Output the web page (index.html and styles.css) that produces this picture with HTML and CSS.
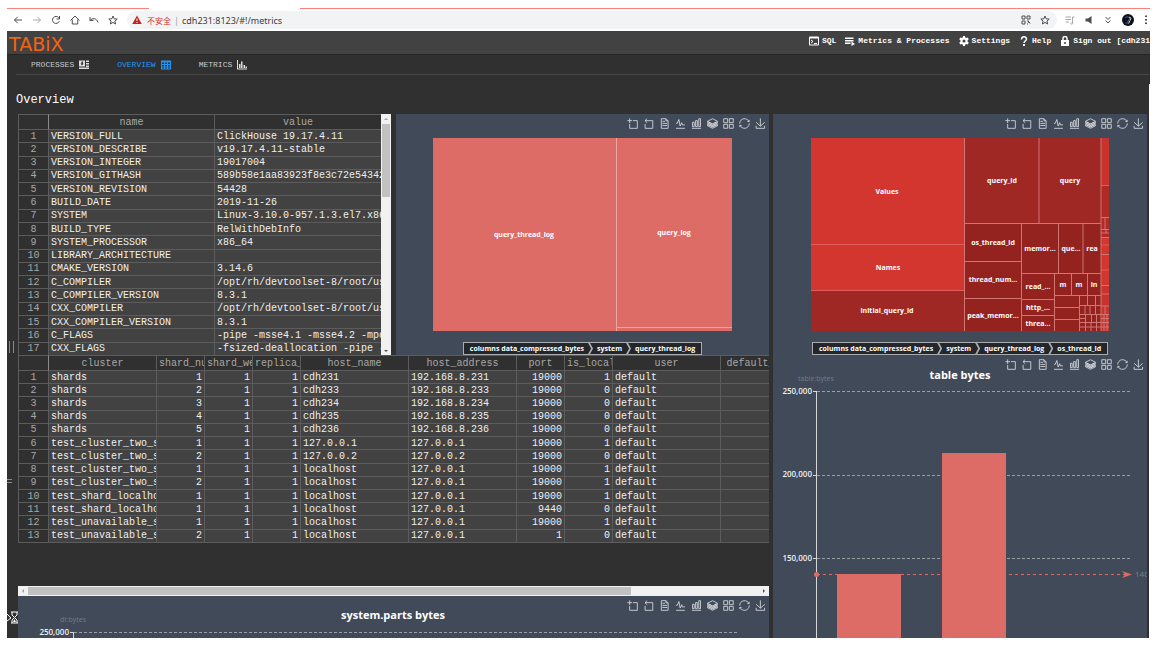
FILE: index.html
```html
<!DOCTYPE html>
<html lang="en">
<head>
<meta charset="utf-8">
<title>TABiX - Metrics</title>
<link rel="stylesheet" href="styles.css">
</head>
<body>
<svg class="defs" aria-hidden="true">
  <symbol id="i-zoom" viewBox="-2 -2 64 64"><path d="M0,13.5h26.9 M13.5,26.9V0 M32.1,13.5H58V58H13.5 V32.1"/></symbol>
  <symbol id="i-back" viewBox="-2 -2 64 64"><path d="M22,1.4L9.9,13.5l12.3,12.3 M10.3,13.5H54.9v44.6 H10.3v-26"/></symbol>
  <symbol id="i-data" viewBox="-2 -2 64 64"><path d="M17.5,17.3H33 M45.4,29.5h-28 M11.5,2v56H51V14.8L38.4,2H11.5z M38.4,2.2v12.7H51 M45.4,41.7h-28"/></symbol>
  <symbol id="i-line" viewBox="-2 -2 64 64"><path d="M4.1,28.9h7.1l9.3-22l7.4,38l9.7-19.7l3,12.8h14.9M4.1,58h51.4"/></symbol>
  <symbol id="i-bar" viewBox="-2 -2 64 64"><path d="M6.7,22.9h10V48h-10V22.9zM24.9,13h10v35h-10V13zM43.2,2h10v46h-10V2zM3.1,58h53.7"/></symbol>
  <symbol id="i-stack" viewBox="-2 -2 64 64"><path d="M8.2,38.4l-8.4,4.1l30.6,15.3L60,42.5l-8.1-4.1l-21.5,11L8.2,38.4z M51.9,30l-8.1,4.2l-13.4,6.9l-13.9-6.9L8.2,30l-8.4,4.2l8.4,4.2l22.2,11l21.5-11l8.1-4.2L51.9,30z M51.9,21.7l-8.1,4.2L35.7,30l-5.3,2.8L24.9,30l-8.4-4.1l-8.3-4.2l-8.4,4.2L8.2,30l8.3,4.2l13.9,6.9l13.4-6.9l8.1-4.2l8.1-4.1L51.9,21.7zM30.4,2.2L-0.2,17.5l8.4,4.1l8.3,4.2l8.4,4.2l5.5,2.7l5.3-2.7l8.1-4.2l8.1-4.2l8.1-4.1L30.4,2.2z"/></symbol>
  <symbol id="i-tiled" viewBox="-2 -2 64 64"><path d="M2.3,2.2h22.8V25H2.3V2.2z M35,2.2h22.8V25H35V2.2zM2.3,35h22.8v22.8H2.3V35z M35,35h22.8v22.8H35V35z"/></symbol>
  <symbol id="i-restore" viewBox="-2 -2 64 64"><path d="M47,18.9h9.8V8.7 M56.3,20.1 C52.1,9,40.5,0.6,26.8,2.1C12.6,3.7,1.6,16.2,2.1,30.6 M13,41.1H3.1v10.2 M3.7,39.9c4.2,11.1,15.8,19.5,29.5,18 c14.2-1.6,25.2-14.1,24.7-28.5"/></symbol>
  <symbol id="i-save" viewBox="-2 -2 64 64"><path d="M4.7,22.9L29.3,45.5L54.7,23.4M4.6,43.6L4.6,58L53.8,58L53.8,43.6M29.2,45.1L29.2,0"/></symbol>
  <symbol id="i-star" viewBox="0 0 20 20"><path d="M10 2l2.400 5.600 6 .5-4.600 4 1.400 5.900L10 14.800 4.800 18l1.400-5.900-4.600-4 6-.5z"/></symbol>
</svg>

<div class="window">
  <div class="strip"><span class="strip-a"></span><span class="strip-b"></span></div>

  <div class="browser">
    <div class="tools">
      <button type="button" aria-label="Back"><svg viewBox="0 0 20 20"><path d="M18 10H3M9.500 3.500L3 10l6.500 6.500"/></svg></button>
      <button type="button" class="dim" aria-label="Forward"><svg viewBox="0 0 20 20"><path d="M2 10h15M10.500 3.500L17 10l-6.500 6.500"/></svg></button>
      <button type="button" aria-label="Reload"><svg viewBox="0 0 20 20"><path d="M16.500 12.500A7 7 0 1 1 15.500 5.500M17 2v6h-6"/></svg></button>
      <button type="button" aria-label="Home"><svg viewBox="0 0 20 20"><path d="M1 11L10 2l9 9M4.500 9v9h11V9"/></svg></button>
      <button type="button" aria-label="Undo"><svg viewBox="0 0 20 20"><path d="M2 4v7h7M2 11C6 6 15 5 18 15"/></svg></button>
      <button type="button" aria-label="Favorites"><svg><use href="#i-star"/></svg></button>
    </div>
    <div class="address">
      <svg class="warn" viewBox="0 0 20 20"><path d="M10 1l9.500 17H.5z"/><path class="mark" d="M10 7v5M10 14v2"/></svg>
      <span class="unsafe">不安全</span>
      <span class="bar">|</span>
      <input type="text" aria-label="Address" value="cdh231:8123/#!/metrics">
      <button type="button" aria-label="QR code"><svg viewBox="0 0 20 20"><path d="M2 2h6v6H2zM12 2h6v6h-6zM2 12h6v6H2zM12 12h3v3h3M12 18h2M18 18v-1"/></svg></button>
      <button type="button" aria-label="Bookmark"><svg><use href="#i-star"/></svg></button>
    </div>
    <div class="tools tools-end">
      <button type="button" class="dim" aria-label="Playlist"><svg viewBox="0 0 20 20"><path d="M1 4h11M1 9h11M1 14h7M15 16V4h4M15 15a2 2 0 1 1-3 0"/></svg></button>
      <button type="button" aria-label="Mute"><svg viewBox="0 0 20 20"><path class="solid" d="M3 7h5l7-5v16l-7-5H3z"/></svg></button>
      <button type="button" aria-label="More extensions"><svg viewBox="0 0 20 20"><path d="M5 4l5 5 5-5M5 11l5 5 5-5"/></svg></button>
      <button type="button" class="avatar" aria-label="Profile"><svg viewBox="0 0 24 24"><circle cx="12" cy="12" r="12" fill="#0b1020" stroke="none"/><path d="M6 8c4-4 8-2 9 1s-4 3-3 6-3 4-5 3" fill="none" stroke="#4f6b9c" stroke-width="2"/><path d="M14 6l4 2-2 5-3 6" fill="none" stroke="#d0d09a" stroke-width="2"/></svg></button>
      <button type="button" class="dots" aria-label="Menu"><svg viewBox="0 0 6 20"><path class="solid" d="M1 1h4v3H1zM1 8h4v3H1zM1 15h4v3H1z"/></svg></button>
    </div>
  </div>

  <header class="header">
    <a class="logo" href="#">TABiX</a>
    <nav class="menu" aria-label="Main">
      <a href="#"><svg viewBox="0 0 20 20"><path fill="#fff" fill-rule="evenodd" d="M2 1h16a2 2 0 0 1 2 2v14a2 2 0 0 1-2 2H2a2 2 0 0 1-2-2V3a2 2 0 0 1 2-2zM2 5v12h16V5z"/><path d="M4 8l4 3-4 3M10 15h6" fill="none" stroke="#fff" stroke-width="2"/></svg>SQL</a>
      <a href="#"><svg viewBox="0 0 20 20"><path fill="#fff" d="M0 3h17v3H0zM0 8h17v3H0zM0 13h11v3H0zM13 11l7 5-7 4z"/></svg>Metrics &amp; Processes</a>
      <a href="#"><svg viewBox="0 0 20 20"><path fill="#fff" fill-rule="evenodd" d="M8 0h4l.5 3 2 1 3-1 2 3.500L17 9v2l2.500 2.500-2 3.500-3-1-2 1-.5 3H8l-.5-3-2-1-3 1-2-3.500L3 11V9L.5 6.500l2-3.500 3 1 2-1zM10 7a3 3 0 1 0 0 6 3 3 0 0 0 0-6z"/></svg>Settings</a>
      <a href="#"><svg viewBox="0 0 20 20"><path d="M5 7c0-7 10-7 10-1 0 4-5 4-5 8" fill="none" stroke="#fff" stroke-width="3"/><path fill="#fff" d="M8 16h4v4H8z"/></svg>Help</a>
      <a href="#"><svg viewBox="0 0 20 20"><path fill="#fff" fill-rule="evenodd" d="M2 8h16v12H2zM10 12a2 2 0 1 0 0 4 2 2 0 0 0 0-4z"/><path d="M6 9V5a4 4 0 0 1 8 0v4" fill="none" stroke="#fff" stroke-width="3"/></svg>Sign out [cdh231</a>
    </nav>
  </header>

  <nav class="tabs" aria-label="Sections">
    <a href="#">PROCESSES<svg viewBox="0 0 20 20"><path fill="#ddd" fill-rule="evenodd" d="M0 1h12v12H0zM5 3v4H3l3 4 3-4H8V3zM14 1h6v3h-6zM14 6h6v3h-6zM14 11h6v3h-6zM0 15h20v3H0z"/></svg></a>
    <a href="#" class="active" aria-current="page">OVERVIEW<svg viewBox="0 0 20 20"><path fill="#2196f3" fill-rule="evenodd" d="M0 1h20v18H0zM2 5v3h4V5zM8 5v3h4V5zM14 5v3h4V5zM2 10v3h4v-3zM8 10v3h4v-3zM14 10v3h4v-3zM2 15v2h4v-2zM8 15v2h4v-2zM14 15v2h4v-2z"/></svg></a>
    <a href="#">METRICS<svg viewBox="0 0 20 20"><path fill="#ddd" d="M0 0h2v17h18v2H0zM4 8h3v8H4zM8 3h3v13H8zM13 10h3v6h-3zM17 13h3v3h-3z"/></svg></a>
  </nav>

  <div class="page">
    <main class="content">
      <h1>Overview</h1>
      <div class="board">
        <div class="col">
          <div class="pair">
            <section class="sheet sheet-v">
              <div class="clip">
                <table class="info">
                  <colgroup><col class="w-num"><col class="w-name"><col></colgroup>
                  <thead><tr><th></th><th>name</th><th>value</th></tr></thead>
                  <tbody>
                    <tr><th>1</th><td>VERSION_FULL</td><td>ClickHouse 19.17.4.11</td></tr>
                    <tr><th>2</th><td>VERSION_DESCRIBE</td><td>v19.17.4.11-stable</td></tr>
                    <tr><th>3</th><td>VERSION_INTEGER</td><td>19017004</td></tr>
                    <tr><th>4</th><td>VERSION_GITHASH</td><td>589b58e1aa83923f8e3c72e543427</td></tr>
                    <tr><th>5</th><td>VERSION_REVISION</td><td>54428</td></tr>
                    <tr><th>6</th><td>BUILD_DATE</td><td>2019-11-26</td></tr>
                    <tr><th>7</th><td>SYSTEM</td><td>Linux-3.10.0-957.1.3.el7.x86_</td></tr>
                    <tr><th>8</th><td>BUILD_TYPE</td><td>RelWithDebInfo</td></tr>
                    <tr><th>9</th><td>SYSTEM_PROCESSOR</td><td>x86_64</td></tr>
                    <tr><th>10</th><td>LIBRARY_ARCHITECTURE</td><td></td></tr>
                    <tr><th>11</th><td>CMAKE_VERSION</td><td>3.14.6</td></tr>
                    <tr><th>12</th><td>C_COMPILER</td><td>/opt/rh/devtoolset-8/root/usr</td></tr>
                    <tr><th>13</th><td>C_COMPILER_VERSION</td><td>8.3.1</td></tr>
                    <tr><th>14</th><td>CXX_COMPILER</td><td>/opt/rh/devtoolset-8/root/usr</td></tr>
                    <tr><th>15</th><td>CXX_COMPILER_VERSION</td><td>8.3.1</td></tr>
                    <tr><th>16</th><td>C_FLAGS</td><td>-pipe -msse4.1 -msse4.2 -mpop</td></tr>
                    <tr><th>17</th><td>CXX_FLAGS</td><td>-fsized-deallocation -pipe -m</td></tr>
                  </tbody>
                </table>
              </div>
              <div class="scroll scroll-v"><svg viewBox="0 0 10 10"><path class="soft" d="M5 4l2 2H3z"/></svg><span class="thumb"></span><svg viewBox="0 0 10 10"><path d="M5 7l2-2H3z"/></svg></div>
            </section>

            <section class="chart">
              <svg class="plot" viewBox="0 0 373 241" role="img" aria-label="Compressed bytes by table">
                <rect class="salmon" x="37" y="24" width="299" height="193"/>
                <path class="cut light" d="M220.500 24v193M220 213.500h116"/>
                <g class="label"><text x="128" y="123">query_thread_log</text><text x="278" y="121">query_log</text></g>
              </svg>
              <div class="toolbox">
                <button type="button" aria-label="Zoom"><svg><use href="#i-zoom"/></svg></button><button type="button" aria-label="Zoom reset"><svg><use href="#i-back"/></svg></button><button type="button" aria-label="Data view"><svg><use href="#i-data"/></svg></button><button type="button" aria-label="Line"><svg><use href="#i-line"/></svg></button><button type="button" aria-label="Bar"><svg><use href="#i-bar"/></svg></button><button type="button" aria-label="Stack"><svg><use href="#i-stack"/></svg></button><button type="button" aria-label="Tiled"><svg><use href="#i-tiled"/></svg></button><button type="button" aria-label="Restore"><svg><use href="#i-restore"/></svg></button><button type="button" aria-label="Save"><svg><use href="#i-save"/></svg></button>
              </div>
              <ol class="crumbs"><li>columns data_compressed_bytes</li><li>system</li><li>query_thread_log</li></ol>
            </section>
          </div>

          <section class="sheet sheet-h">
            <div class="clip">
              <table class="hosts">
                <colgroup><col class="w-num"><col class="w-wide"><col class="w-slim"><col class="w-slim"><col class="w-slim"><col class="w-wide"><col class="w-wide"><col class="w-slim"><col class="w-slim"><col class="w-wide"><col class="w-wide"></colgroup>
                <thead><tr><th></th><th>cluster</th><th>shard_num</th><th>shard_weight</th><th>replica_num</th><th>host_name</th><th>host_address</th><th>port</th><th>is_local</th><th>user</th><th>default_database</th></tr></thead>
                <tbody>
                  <tr><th>1</th><td>shards</td><td class="n">1</td><td class="n">1</td><td class="n">1</td><td>cdh231</td><td>192.168.8.231</td><td class="n">19000</td><td class="n">1</td><td>default</td><td></td></tr>
                  <tr><th>2</th><td>shards</td><td class="n">2</td><td class="n">1</td><td class="n">1</td><td>cdh233</td><td>192.168.8.233</td><td class="n">19000</td><td class="n">0</td><td>default</td><td></td></tr>
                  <tr><th>3</th><td>shards</td><td class="n">3</td><td class="n">1</td><td class="n">1</td><td>cdh234</td><td>192.168.8.234</td><td class="n">19000</td><td class="n">0</td><td>default</td><td></td></tr>
                  <tr><th>4</th><td>shards</td><td class="n">4</td><td class="n">1</td><td class="n">1</td><td>cdh235</td><td>192.168.8.235</td><td class="n">19000</td><td class="n">0</td><td>default</td><td></td></tr>
                  <tr><th>5</th><td>shards</td><td class="n">5</td><td class="n">1</td><td class="n">1</td><td>cdh236</td><td>192.168.8.236</td><td class="n">19000</td><td class="n">0</td><td>default</td><td></td></tr>
                  <tr><th>6</th><td>test_cluster_two_shards</td><td class="n">1</td><td class="n">1</td><td class="n">1</td><td>127.0.0.1</td><td>127.0.0.1</td><td class="n">19000</td><td class="n">1</td><td>default</td><td></td></tr>
                  <tr><th>7</th><td>test_cluster_two_shards</td><td class="n">2</td><td class="n">1</td><td class="n">1</td><td>127.0.0.2</td><td>127.0.0.2</td><td class="n">19000</td><td class="n">0</td><td>default</td><td></td></tr>
                  <tr><th>8</th><td>test_cluster_two_shards</td><td class="n">1</td><td class="n">1</td><td class="n">1</td><td>localhost</td><td>127.0.0.1</td><td class="n">19000</td><td class="n">1</td><td>default</td><td></td></tr>
                  <tr><th>9</th><td>test_cluster_two_shards</td><td class="n">2</td><td class="n">1</td><td class="n">1</td><td>localhost</td><td>127.0.0.1</td><td class="n">19000</td><td class="n">1</td><td>default</td><td></td></tr>
                  <tr><th>10</th><td>test_shard_localhost</td><td class="n">1</td><td class="n">1</td><td class="n">1</td><td>localhost</td><td>127.0.0.1</td><td class="n">19000</td><td class="n">1</td><td>default</td><td></td></tr>
                  <tr><th>11</th><td>test_shard_localhost</td><td class="n">1</td><td class="n">1</td><td class="n">1</td><td>localhost</td><td>127.0.0.1</td><td class="n">9440</td><td class="n">0</td><td>default</td><td></td></tr>
                  <tr><th>12</th><td>test_unavailable_shard</td><td class="n">1</td><td class="n">1</td><td class="n">1</td><td>localhost</td><td>127.0.0.1</td><td class="n">19000</td><td class="n">1</td><td>default</td><td></td></tr>
                  <tr><th>13</th><td>test_unavailable_shard</td><td class="n">2</td><td class="n">1</td><td class="n">1</td><td>localhost</td><td>127.0.0.1</td><td class="n">1</td><td class="n">0</td><td>default</td><td></td></tr>
                </tbody>
              </table>
            </div>
            <div class="scroll scroll-h"><svg viewBox="0 0 10 10"><path class="soft" d="M4 5l2-2v4z"/></svg><span class="thumb"></span><svg viewBox="0 0 10 10"><path d="M6 5L4 3v4z"/></svg></div>
          </section>

          <section class="chart">
            <svg class="plot" viewBox="0 0 751 241" role="img" aria-label="system.parts bytes">
              <text class="title" x="375" y="23">system.parts bytes</text>
              <text class="axis-name" x="55" y="26">dt:bytes</text>
              <path class="axis" d="M55.500 36v205M52 36.500h3"/>
              <path class="dash" d="M56 36.500h665"/>
              <text class="tick" x="51" y="39">250,000</text>
            </svg>
            <div class="toolbox">
              <button type="button" aria-label="Zoom"><svg><use href="#i-zoom"/></svg></button><button type="button" aria-label="Zoom reset"><svg><use href="#i-back"/></svg></button><button type="button" aria-label="Data view"><svg><use href="#i-data"/></svg></button><button type="button" aria-label="Line"><svg><use href="#i-line"/></svg></button><button type="button" aria-label="Bar"><svg><use href="#i-bar"/></svg></button><button type="button" aria-label="Stack"><svg><use href="#i-stack"/></svg></button><button type="button" aria-label="Tiled"><svg><use href="#i-tiled"/></svg></button><button type="button" aria-label="Restore"><svg><use href="#i-restore"/></svg></button><button type="button" aria-label="Save"><svg><use href="#i-save"/></svg></button>
            </div>
          </section>
        </div>

        <div class="col">
          <section class="chart">
            <svg class="plot" viewBox="0 0 374 241" role="img" aria-label="Compressed bytes by column">
              <rect x="38" y="24" width="298" height="193" fill="#942320"/>
              <rect x="38" y="24" width="153" height="152" fill="#d3352f"/>
              <rect x="38" y="176" width="153" height="41" fill="#a02824"/>
              <rect x="191" y="24" width="137" height="85" fill="#a02824"/>
              <rect x="328" y="24" width="8" height="193" fill="#c9322d"/>
              <rect x="328" y="72" width="8" height="51" fill="#b02a26"/>
              <rect x="328" y="124" width="8" height="47" fill="#d3352f"/>
              <path class="cut soft" d="M38 130.500h153M38 176.500h153M328 71.500h8M328 131h8M328 156h8"/>
              <path class="cut" d="M191.500 24v193M266 24v85M191 109.500h137M248.500 109v108M285.500 109v50M310 109v50M248 159.500h80M191 147.500h57M191 184.500h57M281.500 159v58M248 185.500h33M248 201.500h33M298.500 159v22M314.500 159v22M281 181.500h47M281 193.500h25M281 205.500h25M306.500 181v36M306 191.500h22M306 200.500h30M306 208.500h30M314.500 181v10M322.500 181v10M312 191v9M317 191v9M322.500 191v9M312.500 200v17M318.500 200v8M323.500 200v17M306 204.500h6M306 213h30M318 208v9M328 24v193M328 103.500h8M332 103v12M328 115.500h8M328 119h8M333 115v4M328 123.500h8M328 140.500h8M328 171.500h8M328 180h8M328 192h8M332 192v8M331 200v17M334 200v17M328 204.500h8"/>
              <g class="label">
                <text x="114" y="80">Values</text><text x="115" y="156">Names</text><text x="114" y="199">initial_query_id</text>
                <text x="229" y="69">query_id</text><text x="297" y="69">query</text>
                <text x="220" y="131">os_thread_id</text><text x="220" y="168">thread_num...</text><text x="220" y="204">peak_memor...</text>
                <text x="267" y="137">memor...</text><text x="298" y="137">que...</text><text x="319" y="137">rea</text>
                <text x="265" y="175">read_...</text><text x="265" y="196">http_...</text><text x="265" y="212">threa...</text>
                <text x="290" y="173">m</text><text x="306" y="173">m</text><text x="321" y="173">in</text>
              </g>
            </svg>
            <div class="toolbox">
              <button type="button" aria-label="Zoom"><svg><use href="#i-zoom"/></svg></button><button type="button" aria-label="Zoom reset"><svg><use href="#i-back"/></svg></button><button type="button" aria-label="Data view"><svg><use href="#i-data"/></svg></button><button type="button" aria-label="Line"><svg><use href="#i-line"/></svg></button><button type="button" aria-label="Bar"><svg><use href="#i-bar"/></svg></button><button type="button" aria-label="Stack"><svg><use href="#i-stack"/></svg></button><button type="button" aria-label="Tiled"><svg><use href="#i-tiled"/></svg></button><button type="button" aria-label="Restore"><svg><use href="#i-restore"/></svg></button><button type="button" aria-label="Save"><svg><use href="#i-save"/></svg></button>
            </div>
            <ol class="crumbs"><li>columns data_compressed_bytes</li><li>system</li><li>query_thread_log</li><li>os_thread_id</li></ol>
          </section>

          <section class="chart">
            <svg class="plot" viewBox="0 0 374 400" role="img" aria-label="table bytes">
              <text class="title" x="187" y="24">table bytes</text>
              <text class="axis-name" x="43" y="26">table:bytes</text>
              <path class="dash" d="M44 36.500h315M44 120.500h315M44 203.500h315"/>
              <path class="axis" d="M43.500 36v364M40 36.500h3M40 120.500h3M40 203.500h3"/>
              <text class="tick" x="39" y="39">250,000</text>
              <text class="tick" x="39" y="122">200,000</text>
              <text class="tick" x="39" y="206">150,000</text>
              <rect class="salmon" x="64" y="219" width="64" height="181"/>
              <rect class="salmon" x="169" y="98" width="64" height="302"/>
              <path class="mark-line" d="M44 219.500h308"/>
              <circle class="salmon" cx="43.500" cy="219.500" r="2.500"/>
              <path class="salmon" d="M349 216l10 3.500-10 3.500 3-3.500z"/>
              <text class="mark-text" x="362" y="222">140,8</text>
            </svg>
            <div class="toolbox">
              <button type="button" aria-label="Zoom"><svg><use href="#i-zoom"/></svg></button><button type="button" aria-label="Zoom reset"><svg><use href="#i-back"/></svg></button><button type="button" aria-label="Data view"><svg><use href="#i-data"/></svg></button><button type="button" aria-label="Line"><svg><use href="#i-line"/></svg></button><button type="button" aria-label="Bar"><svg><use href="#i-bar"/></svg></button><button type="button" aria-label="Stack"><svg><use href="#i-stack"/></svg></button><button type="button" aria-label="Tiled"><svg><use href="#i-tiled"/></svg></button><button type="button" aria-label="Restore"><svg><use href="#i-restore"/></svg></button><button type="button" aria-label="Save"><svg><use href="#i-save"/></svg></button>
            </div>
          </section>
        </div>
      </div>
      <span class="grip grip-v"></span>
      <span class="grip grip-h"></span>
      <svg class="pointer" viewBox="0 0 11 13"><path d="M0 3l4 4-4 3M4 1h7M4 12h7M5 1v3l2.500 2.500L5 9v3M10 1v3L7.500 6.500 10 9v3" fill="none" stroke="#fff"/><path d="M6 11l1.500-3L9 11z" fill="#fff"/></svg>
    </main>
    <div class="rail"></div>
  </div>
</div>
</body>
</html>
```
FILE: styles.css
```css
* { box-sizing: border-box; }

body {
  margin: 0;
  padding: 8px 6px 8px 7px;
  background: #fff;
  font-family: "Liberation Mono", "Courier New", monospace;
  color: #fff;
}

a { color: inherit; text-decoration: none; }

button {
  display: block;
  padding: 0;
  border: 0;
  background: none;
  color: inherit;
}

svg { display: block; }
.defs { position: absolute; width: 0; height: 0; }

.window {
  display: flex;
  flex-direction: column;
  height: calc(100vh - 16px);
  overflow: hidden;
}

/* browser chrome */
.strip { display: flex; flex: none; height: 1px; }
.strip-a, .strip-b { background: #ff7f7a; }
.strip-a { width: 142px; margin-right: 151px; }
.strip-b { flex: 1; }

.browser {
  display: flex;
  flex: none;
  align-items: center;
  height: 22px;
  color: #4a4d51;
}

.tools { display: flex; gap: 9px; padding: 0 9px 0 6px; }
.tools-end { padding: 0 1px 0 8px; align-items: center; }

.browser button { width: 10px; height: 10px; }
.browser svg {
  width: 100%;
  height: 100%;
  fill: none;
  stroke: currentColor;
  stroke-width: 2;
}
.browser .solid { fill: currentColor; stroke: none; }
.browser .dim { color: #a5a8ab; }
.browser .avatar { width: 12px; height: 12px; }
.browser .dots { width: 6px; }

.address {
  display: flex;
  flex: 1;
  align-items: center;
  height: 18px;
  padding: 0 7px 0 5px;
  border-radius: 9px;
  background: #f1f3f4;
  font-family: "Noto Sans", "Noto Sans CJK SC", sans-serif;
  font-size: 9px;
}
.address .warn { width: 10px; height: 10px; margin-right: 5px; fill: #c5221f; stroke: none; }
.address .mark { stroke: #fff; }
.unsafe { color: #d93025; font-family: "Noto Sans CJK SC", sans-serif; font-size: 8px; }
.bar { margin: 0 3px; color: #9aa0a6; }
.address input {
  flex: 1;
  min-width: 0;
  padding: 0;
  border: 0;
  background: none;
  color: #3c4043;
  font: inherit;
}
.address button { margin-left: 9px; }

/* application header */
.header {
  display: flex;
  flex: none;
  align-items: center;
  justify-content: space-between;
  height: 24px;
  padding-left: 2px;
  border-bottom: 1px solid #262626;
  background: #424242;
}
.logo {
  padding-top: 3px;
  color: #f26411;
  font-family: "DejaVu Sans", sans-serif;
  font-size: 19px;
  line-height: 20px;
}
.menu {
  display: flex;
  gap: 9px;
  padding-bottom: 3px;
  font-size: 8px;
  font-weight: bold;
  line-height: 12px;
  white-space: nowrap;
}
.menu a { display: flex; align-items: center; gap: 3px; }
.menu svg { width: 10px; height: 10px; }

.tabs {
  display: flex;
  flex: none;
  gap: 28px;
  height: 19px;
  padding-left: 24px;
  background: #303030;
  color: #c8c8c8;
  font-size: 8px;
  line-height: 19px;
}
.tabs a { display: flex; gap: 5px; align-items: center; }
.tabs svg { width: 10px; height: 10px; }
.tabs .active { color: #2196f3; }

.page {
  display: flex;
  flex: 1;
  min-height: 0;
  background: #303030;
}
.content {
  position: relative;
  flex: 1;
  min-width: 0;
  padding: 0 2px 0 11px;
  overflow: hidden;
}
.content::before {
  content: "";
  display: block;
  height: 9px;
  margin: 0 -3px 0 -2px;
  border-top: 1px solid #484848;
}
.rail { width: 1px; margin-top: 10px; background: #fff; }

h1 {
  margin: 0 0 0 -2px;
  padding-top: 2px;
  font-size: 12px;
  font-weight: normal;
  line-height: 28px;
}

.board {
  display: grid;
  grid-template-columns: 751fr 374fr;
  gap: 4px;
  align-items: start;
}
.col { min-width: 0; }
.pair { display: grid; grid-template-columns: 1fr 1fr; gap: 5px; }

/* spreadsheets */
.sheet { display: flex; height: 241px; min-width: 0; }
.sheet-h { flex-direction: column; }
.clip { flex: 1; min-width: 0; min-height: 0; overflow: hidden; }

table {
  border-collapse: separate;
  border-spacing: 0;
  table-layout: fixed;
  font-size: 10px;
  line-height: 11px;
}
.info { width: 364px; height: 242px; }
.hosts { width: 811px; height: 188px; }
.w-num { width: 31px; }
.w-name { width: 166px; }
.w-wide { width: 108px; }
.w-slim { width: 48px; }

th, td {
  padding: 0 2px;
  border: 0 solid #5c5c5c;
  border-width: 0 1px 1px 0;
  overflow: hidden;
  white-space: nowrap;
  text-align: left;
}
th {
  background: #303030;
  color: #a8a8a8;
  font-weight: normal;
  text-align: center;
}
td { background: #424242; color: #f0f0f0; }
tr > :first-child { border-left-width: 1px; }
thead th { height: 16px; border-top-width: 1px; }
thead th:first-child { border-right-color: #8a8a8a; }
.n { text-align: right; }

.scroll { display: flex; flex: none; background: #f1f1f1; }
.scroll svg { flex: none; width: 10px; height: 10px; fill: #505050; }
.scroll .soft { fill: #a3a3a3; }
.thumb { background: #c1c1c1; }
.scroll-v { flex-direction: column; width: 10px; }
.scroll-v .thumb { height: 73px; margin: 0 1px auto; }
.scroll-h .thumb { width: 603px; margin: 1px auto 1px 0; }

/* charts */
.chart {
  position: relative;
  background: #404a59;
  font-family: "Open Sans", sans-serif;
}
.plot { width: 100%; height: auto; overflow: hidden; }

.toolbox {
  position: absolute;
  top: 4px;
  right: 3px;
  display: flex;
  gap: 5px;
}
.toolbox svg {
  width: 11px;
  height: 11px;
  fill: none;
  stroke: #d8dadd;
  stroke-width: 5;
}

.crumbs {
  position: absolute;
  right: 0;
  bottom: 0;
  left: 0;
  display: flex;
  width: max-content;
  height: 13px;
  margin: 0 auto;
  padding: 0 2px;
  border: 1px solid #a9abad;
  background: #23272b;
  color: #fff;
  font-size: 7px;
  font-weight: 700;
  line-height: 11px;
  list-style: none;
}
.crumbs li { display: flex; padding: 0 4px; }
.crumbs li + li { padding-left: 0; }
.crumbs li + li::before {
  content: "";
  width: 5px;
  height: 11px;
  margin-right: 4px;
  background: #a9abad;
  clip-path: polygon(0 0, 40% 0, 100% 50%, 40% 100%, 0 100%, 60% 50%);
}

.salmon { fill: #dd6b66; }
.cut { fill: none; stroke: #cf7572; stroke-width: 1; }
.cut.soft { stroke: #de5f5a; }
.cut.light { stroke: #eba6a3; }
.label { fill: #fff; font-size: 7px; font-weight: 700; text-anchor: middle; }
.title { fill: #fff; font-size: 11px; font-weight: 700; text-anchor: middle; }
.axis-name { fill: #737b86; font-size: 7px; text-anchor: middle; }
.axis { fill: none; stroke: #d5d7da; }
.dash { fill: none; stroke: #9a9fa6; stroke-dasharray: 3 2; }
.tick { fill: #f0f0f0; font-size: 8px; font-weight: 600; text-anchor: end; }
.mark-line { fill: none; stroke: #dd6b66; stroke-dasharray: 3 3; }
.mark-text { fill: #7d838d; font-size: 8px; }

/* side panel handles and the mouse pointer */
.grip { position: absolute; border: 0 solid #8a8a8a; }
.grip-v { top: 267px; left: 2px; width: 5px; height: 12px; border-width: 0 1px; }
.grip-h { top: 405px; left: 0; width: 5px; height: 4px; border-width: 1px 0; }
.pointer { position: absolute; top: 537px; left: 0; width: 11px; height: 13px; }
```
